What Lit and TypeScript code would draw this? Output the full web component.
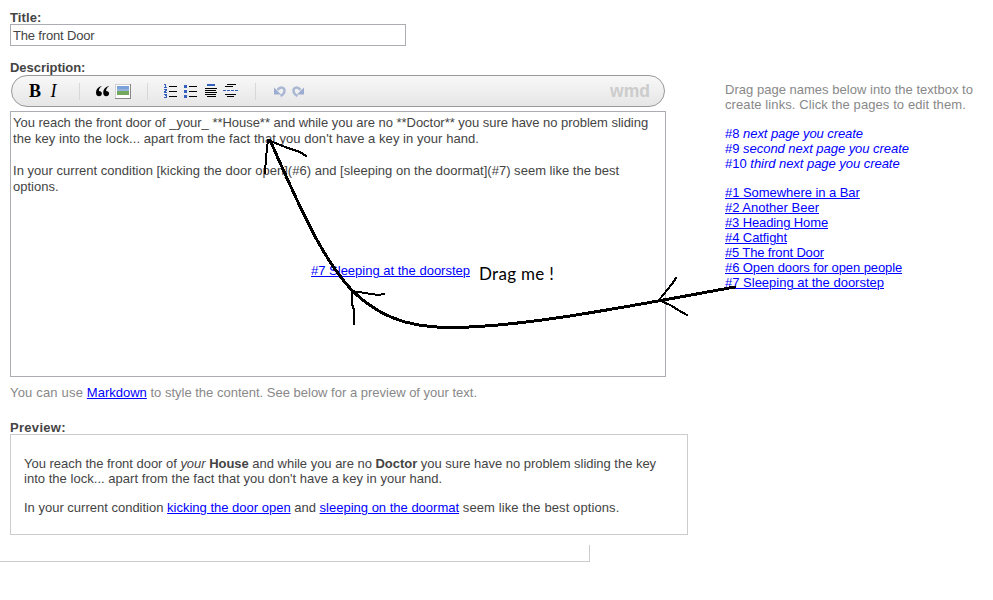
import { LitElement, html, css, svg } from "lit";
import { customElement } from "lit/decorators.js";

const upcoming = [
  ["#8", "next page you create", -0.08],
  ["#9", "second next page you create", -0.04],
  ["#10", "third next page you create", -0.04],
];
const pages: [string, number][] = [
  ["#1 Somewhere in a Bar", -0.05],
  ["#2 Another Beer", 0],
  ["#3 Heading Home", -0.12],
  ["#4 Catfight", -0.08],
  ["#5 The front Door", -0.16],
  ["#6 Open doors for open people", -0.1],
  ["#7 Sleeping at the doorstep", 0],
];

@customElement("app-root")
export class AppRoot extends LitElement {
  static styles = css`
    :host {
      display: block;
      position: relative;
      width: 993px;
      height: 600px;
      overflow: hidden;
      background: #fff;
      color: #444;
      font: 13px/15px "Liberation Sans", Arial, sans-serif;
    }
    * { box-sizing: border-box; }
    a { color: #00f; text-decoration: underline; text-underline-offset: 1px; text-decoration-thickness: 1px; }
    p { margin: 0; white-space: nowrap; }
    .page { display: flex; }
    .form { width: 725px; padding: 10px 0 0 10px; flex: none; }
    label { display: block; font-weight: bold; height: 15px; letter-spacing: 0.1px; }
    .title { margin-top: -1px; width: 396px; height: 22px; border: 1px solid #abadb3; padding: 3px 2px; letter-spacing: -0.17px; }
    .desc { margin-top: 14px; letter-spacing: -0.04px; }
    .bar { display: block; }
    .area { margin-top: 4px; width: 656px; height: 266px; border: 1px solid #abadb3; padding: 3px 2px; line-height: 16px; }
    .a1 { letter-spacing: -0.03px; }
    .a2 { letter-spacing: 0.055px; }
    .a3 { letter-spacing: 0.02px; }
    .help { margin-top: 8px; color: #888; }
    .wide { letter-spacing: 0.18px; }
    .preview-label { margin-top: 20px; letter-spacing: 0.3px; }
    .preview { margin-top: -1px; width: 678px; height: 101px; border: 1px solid #ccc; padding: 21px 13px; }
    .p1 { letter-spacing: -0.025px; }
    .p2 { letter-spacing: 0.03px; }
    .tail { letter-spacing: 0.1px; }
    .gap { margin-top: 14px; }
    .side { padding-top: 82px; color: #888; }
    .s1 { letter-spacing: 0.02px; }
    .s2 { letter-spacing: 0.09px; }
    .next { margin-top: 14px; color: #00f; }
    .links { margin-top: 14px; }
    .foot { margin-top: 10px; width: 590px; height: 17px; border: solid #ccc; border-width: 0 1px 1px 0; }
    .dragged { position: absolute; left: 311px; top: 263px; white-space: nowrap; }
    .note { position: absolute; left: 479px; top: 263px; color: #000; font: 17px/22px Lato, sans-serif; letter-spacing: 0.3px; white-space: nowrap; }
    .ink { position: absolute; left: 0; top: 0; pointer-events: none; }
  `;

  toolbar() {
    return html`<svg class="bar" width="656" height="32" viewBox="10 75 656 32">
      <defs>
        <linearGradient id="g" x2="0" y2="1"><stop stop-color="#f8f8f8" /><stop offset="1" stop-color="#e6e6e6" /></linearGradient>
      </defs>
      <rect x="11.5" y="75.5" width="653" height="31" rx="15.5" fill="url(#g)" stroke="#999" />
      <g font-family="Liberation Serif, serif" fill="#000">
        <text x="29" y="97" font-size="18" font-weight="bold">B</text>
        <text x="50.5" y="97" font-size="18" font-style="italic">I</text>
      </g>
      <g fill="#000">
        <path d="M101.500 86C98 87 96 89.500 96 92.500C96 95 97.200 96.300 99 96.300C100.700 96.300 101.900 95.200 101.900 93.600C101.900 92 100.800 91 98.900 91C98.900 89 99.800 87.500 101.500 86.500Z" />
        <path d="M108.700 86C105.200 87 103.200 89.500 103.200 92.500C103.200 95 104.400 96.300 106.200 96.300C107.900 96.300 109.100 95.200 109.100 93.600C109.100 92 108 91 106.100 91C106.100 89 107 87.500 108.700 86.500Z" />
      </g>
      <path d="M79.500 83v17M147.500 83v17M255.500 83v17" stroke="#d8d8d8" />
      <g shape-rendering="crispEdges">
        <rect x="115" y="84" width="16" height="15" fill="#888" />
        <rect x="115" y="84" width="15" height="14" fill="#d0d0d0" />
        <rect x="116" y="85" width="14" height="13" fill="#fff" />
        <rect x="117" y="86" width="12" height="5" fill="#7ba2d8" />
        <rect x="117" y="89" width="12" height="2" fill="#93b3dc" />
        <rect x="117" y="91" width="12" height="4" fill="#74a95d" />
        <path d="M169 86.500h8M169 91.500h8M169 96.500h8M189 86.500h8M189 91.500h8M189 96.500h8M205 88.500h12M205 90.500h11M205 92.500h12M205 94.500h11M207 96.500h9M227 84.500h9M225 86.500h8M225 94.500h11M227 96.500h7" stroke="#000" />
        <path d="M184 85h3v3h-3zM184 90h3v3h-3zM184 95h3v3h-3zM207 84h8v2h-8z" fill="#3560bd" />
        <path d="M223 90.500h15" stroke="#3560bd" stroke-dasharray="3 1" />
        <path d="M164 84h2v3h1v1h-3v-1h1v-2h-1zM164 89h3v2h-1v1h1v1h-3v-2h1v-1h-1zM164 94h3v4h-3v-1h2v-1h-1v-1h-1z" fill="#3560bd" />
      </g>
      <g fill="none" stroke="#a9b7d3" stroke-width="2.500">
        <path d="M277.500 90C280 86.500 284.500 87 284.500 90.500C284.500 93 283 94.800 280.500 96" />
        <path d="M274 87.500v7h7z" fill="#9bacd0" stroke="none" />
        <path d="M300.500 90C298 86.500 293.500 87 293.500 90.500C293.500 93 295 94.800 297.500 96" />
        <path d="M304 87.500v7h-7z" fill="#9bacd0" stroke="none" />
      </g>
      <text x="610" y="97" font-size="19" font-weight="bold" fill="#ccc" textLength="40" lengthAdjust="spacingAndGlyphs" font-family="Liberation Sans, sans-serif">wmd</text>
    </svg>`;
  }

  ink() {
    return svg`<svg class="ink" width="993" height="600" fill="none" stroke="#000" stroke-linecap="round" stroke-linejoin="round" shape-rendering="crispEdges">
      <path stroke-width="3" d="M735 287C640 304 525 327.500 450 327.500C402 327.500 376 313 353 291.500C325 262 305 220 270 140" />
      <path stroke-width="2" d="M265 173L266 158L268 140L285 147L300 152L306 156M354 324L354 310L352 304L352 291L365 293L378 295L384 294M676 278L672 284L659 300L672 306L678 310L687 315" />
    </svg>`;
  }

  render() {
    return html`
      <div class="page">
        <div class="form">
          <label>Title:</label>
          <div class="title">The front Door</div>
          <label class="desc">Description:</label>
          ${this.toolbar()}
          <div class="area">
            <p class="a1">You reach the front door of _your_ **House** and while you are no **Doctor** you sure have no problem sliding</p>
            <p class="a2">the key into the lock... apart from the fact that you don't have a key in your hand.</p>
            <p>&nbsp;</p>
            <p class="a3">In your current condition [kicking the door open](#6) and [sleeping on the doormat](#7) seem like the best</p>
            <p>options.</p>
          </div>
          <p class="help"><span class="wide">You can use </span><a>Markdown</a> to style the content. See below for a preview of your text.</p>
          <label class="preview-label">Preview:</label>
          <div class="preview">
            <p class="p1">You reach the front door of <i>your</i> <b>House</b> and while you are no <b>Doctor</b> you sure have no problem sliding the key</p>
            <p class="p2">into the lock... apart from the fact that you don't have a key in your hand.</p>
            <p class="gap">In your current condition <a>kicking the door open</a> and <a>sleeping on the doormat</a><span class="tail"> seem like the best options.</span></p>
          </div>
        </div>
        <div class="side">
          <p class="s1">Drag page names below into the textbox to</p>
          <p class="s2">create links. Click the pages to edit them.</p>
          <div class="next">${upcoming.map(([n, t, s]) => html`<p>${n} <i style="letter-spacing:${s}px">${t}</i></p>`)}</div>
          <div class="links">${pages.map(([t, s]) => html`<p><a style="letter-spacing:${s}px">${t}</a></p>`)}</div>
        </div>
      </div>
      <div class="foot"></div>
      <a class="dragged">#7 Sleeping at the doorstep</a>
      <span class="note">Drag me !</span>
      ${this.ink()}
    `;
  }
}
